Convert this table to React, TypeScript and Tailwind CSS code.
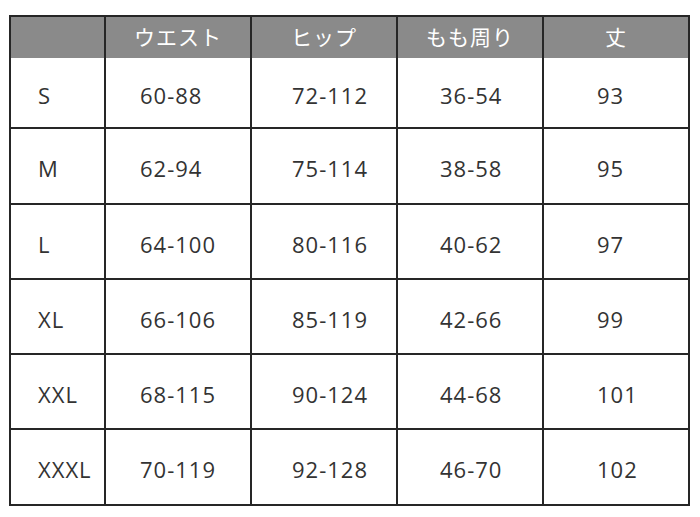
const font = { fontFamily: '"Open Sans", "Noto Sans CJK JP", sans-serif' };

const headers = ['', 'ウエスト', 'ヒップ', 'もも周り', '丈'];

const rows = [
  { size: 'S', cells: ['60-88', '72-112', '36-54', '93'], h: 'h-[69px]' },
  { size: 'M', cells: ['62-94', '75-114', '38-58', '95'], h: 'h-[76px] border-t-2' },
  { size: 'L', cells: ['64-100', '80-116', '40-62', '97'], h: 'h-[75px] border-t-2' },
  { size: 'XL', cells: ['66-106', '85-119', '42-66', '99'], h: 'h-[75px] border-t-2' },
  { size: 'XXL', cells: ['68-115', '90-124', '44-68', '101'], h: 'h-[75px] border-t-2' },
  { size: 'XXXL', cells: ['70-119', '92-128', '46-70', '102'], h: 'h-[76px] border-t-2' },
];

// left padding of each body column, measured from the screenshot
const padding = ['pl-[27px]', 'pl-[34px]', 'pl-[40px]', 'pl-[42px]', 'pl-[53px]'];

const cols = 'grid grid-cols-[93px_146px_146px_146px_146px]';

export default function App() {
  return (
    <div className="h-[517px] w-[700px] bg-white pt-[15px] pl-[9px]" style={font}>
      <div className="w-[681px] border-2 border-[#262626]">
        <div className={`${cols} h-[41px] bg-[#8a8a8a]`}>
          {headers.map((title, i) => (
            <div
              key={i}
              className={`flex items-center justify-center text-[21px] tracking-[1px] text-white ${
                i > 0 ? 'border-l-2 border-[#262626]' : ''
              }`}
            >
              {title}
            </div>
          ))}
        </div>
        {rows.map((row) => (
          <div key={row.size} className={`${cols} ${row.h} border-[#262626]`}>
            {[row.size, ...row.cells].map((value, i) => (
              <div
                key={i}
                className={`flex items-center pt-[5px] text-[22px] tracking-[1px] text-[#333333] ${padding[i]} ${
                  i > 0 ? 'border-l-2 border-[#262626]' : ''
                }`}
              >
                {value}
              </div>
            ))}
          </div>
        ))}
      </div>
    </div>
  );
}
